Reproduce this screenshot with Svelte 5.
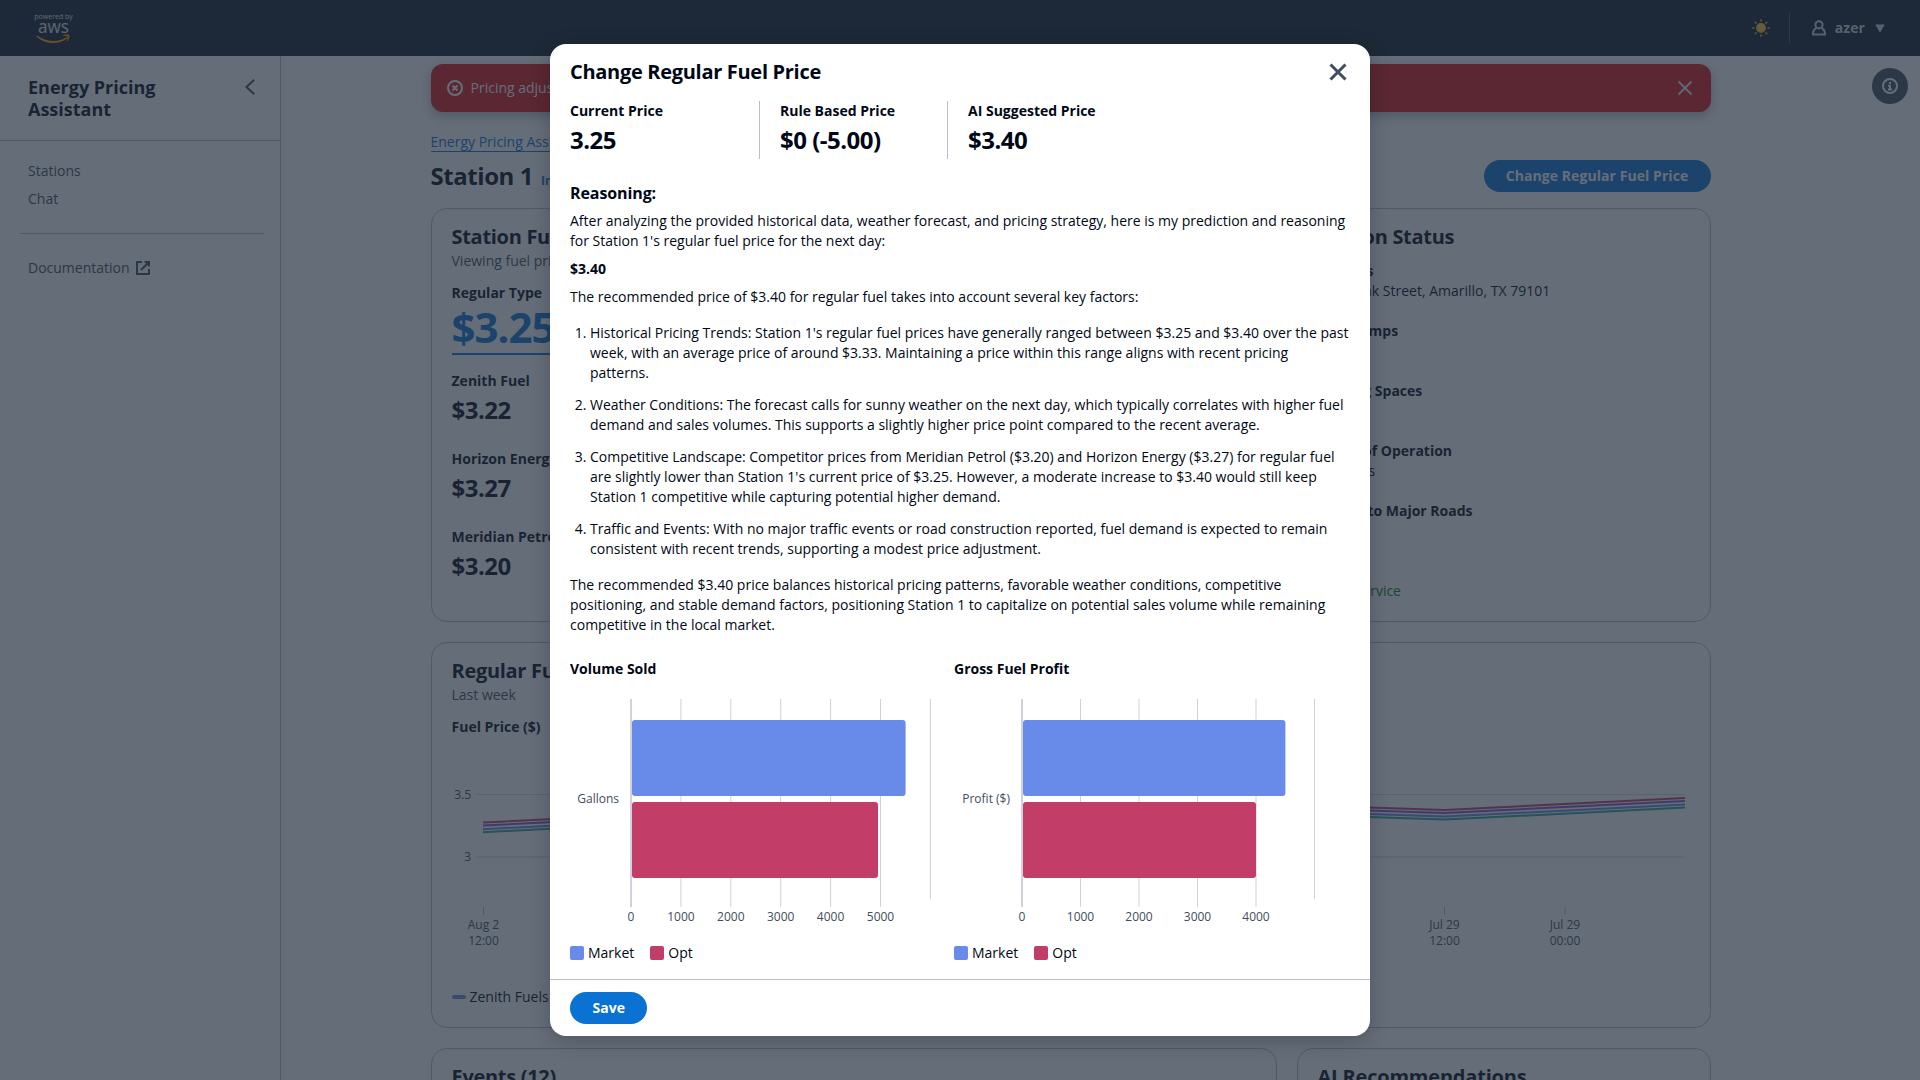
<script>
  const nav = ['Stations', 'Chat'];
  const fuels = [
    ['Zenith Fuel', '$3.22'],
    ['Horizon Energy', '$3.27'],
    ['Meridian Petrol', '$3.20']
  ];
  const status = [
    ['Address', '1742 Oak Street, Amarillo, TX 79101'],
    ['Fuel Pumps', '12'],
    ['Parking Spaces', '20'],
    ['Hours of Operation', '24 hours'],
    ['Access to Major Roads', 'Yes']
  ];
  const prices = [
    ['Current Price', '3.25'],
    ['Rule Based Price', '$0 (-5.00)'],
    ['AI Suggested Price', '$3.40']
  ];
  const factors = [
    "Historical Pricing Trends: Station 1's regular fuel prices have generally ranged between $3.25 and $3.40 over the past week, with an average price of around $3.33. Maintaining a price within this range aligns with recent pricing patterns.",
    'Weather Conditions: The forecast calls for sunny weather on the next day, which typically correlates with higher fuel demand and sales volumes. This supports a slightly higher price point compared to the recent average.',
    "Competitive Landscape: Competitor prices from Meridian Petrol ($3.20) and Horizon Energy ($3.27) for regular fuel are slightly lower than Station 1's current price of $3.25. However, a moderate increase to $3.40 would still keep Station 1 competitive while capturing potential higher demand.",
    'Traffic and Events: With no major traffic events or road construction reported, fuel demand is expected to remain consistent with recent trends, supporting a modest price adjustment.'
  ];
  const charts = [
    { title: 'Volume Sold', label: 'Gallons', x0: 61, step: 49.9, ticks: 6, market: 273.6, opt: 246 },
    { title: 'Gross Fuel Profit', label: 'Profit ($)', x0: 68, step: 58.5, ticks: 5, market: 262.4, opt: 233 }
  ];
  const series = [
    ['#c33d69', 0],
    ['#8456ce', 3],
    ['#688ae8', 6.6],
    ['#2ea597', 9.6]
  ];
  const trend = [[31, 181.6], [151, 175.5], [271, 170], [391, 163], [511, 158], [631, 161], [751, 166], [871, 165], [992.5, 169], [1233, 157]];
  const line = (dy) => trend.map(([x, y]) => `${x},${y + dy}`).join(' ');
</script>

<div class="page">
  <header>
    <svg class="logo" width="44" height="36" viewBox="0 0 44 36">
      <text x="21.6" y="8" text-anchor="middle" class="lg-small" textLength="38.5" lengthAdjust="spacingAndGlyphs">powered by</text>
      <text x="21.4" y="21.600" text-anchor="middle" class="lg-aws" textLength="31" lengthAdjust="spacingAndGlyphs">aws</text>
      <g fill="#ff9900" transform="translate(0 1.800)">
        <path d="M5 22.800c9 6.600 21.500 7 29.800 1.400 .7-.4 1.400.400.6 1C28 32 13.500 32.400 4.500 23.600c-.5-.5 0-1 .5-.8z" />
        <path d="M31 22.600c1.500-1 5.200-1.200 6.100-.5.900.8-.2 5-1.900 6.300-.3.200-.6 0-.4-.3.500-1.100 1.300-3.600.9-4.300-.400-.6-3-.4-4.300-.5-.500 0-.7-.4-.4-.7z" />
      </g>
    </svg>
    <div class="tools">
      <svg width="18" height="18" viewBox="0 0 18 18">
        <g stroke="#f5a623" stroke-width="1.500" stroke-linecap="round">
          <path d="M9 .8v1.300M9 15.900v1.300M.8 9h1.300M15.900 9h1.300M3.200 3.200l.9.9M13.900 13.900l.9.900M3.200 14.800l.9-.9M13.900 4.100l.9-.9" />
        </g>
        <circle cx="9" cy="9" r="5" fill="#f5a623" />
        <circle cx="9" cy="8.300" r="4" fill="#fcc934" />
      </svg>
      <i class="sep"></i>
      <svg class="user" width="16" height="16" viewBox="0 0 16 16" fill="none" stroke="#d1d5db" stroke-width="2">
        <circle cx="8" cy="4.800" r="3.600" />
        <path d="M5.300 8.200C3 9 2 11 2 14.600h12c0-3.600-1-5.600-3.300-6.400" stroke-linejoin="round" />
      </svg>
      <b>azer</b>
      <svg width="10" height="9" viewBox="0 0 10 9"><path d="M.3.500h9.400L5 8.700z" fill="#d1d5db" /></svg>
    </div>
  </header>

  <div class="body">
    <aside>
      <div class="side-head">
        <h2>Energy Pricing<br />Assistant</h2>
        <svg width="12" height="16" viewBox="0 0 12 16" fill="none" stroke="#414d5c" stroke-width="2"><path d="M10.200.8L2.500 8l7.700 7.200" /></svg>
      </div>
      <nav>
        {#each nav as item}<span>{item}</span>{/each}
      </nav>
      <hr />
      <div class="doc">
        Documentation
        <svg width="16" height="16" viewBox="0 0 16 16" fill="none" stroke="#414d5c" stroke-width="2"><path d="M7 2H2v12h12V9M9.500 2H14v4.500M14 2L6 10" /></svg>
      </div>
    </aside>

    <main>
      <div class="flash">
        <svg width="16" height="16" viewBox="0 0 16 16" fill="none" stroke="#fff" stroke-width="2"><circle cx="8" cy="8" r="7" /><path d="M5.500 5.500l5 5M10.500 5.500l-5 5" /></svg>
        <span>Pricing adjustment required</span>
        <svg width="16" height="16" viewBox="0 0 16 16" fill="none" stroke="#ebebf0" stroke-width="2"><path d="M1.500 1.500l13 13M14.500 1.500l-13 13" /></svg>
      </div>
      <div class="crumb"><span>Energy Pricing Assistant</span></div>
      <div class="head">
        <h1>Station 1</h1><em>Info</em>
        <span class="btn wide">Change Regular Fuel Price</span>
      </div>

      <div class="row">
        <section>
          <h3>Station Fuel Prices</h3>
          <p class="sub">Viewing fuel prices</p>
          <b class="lbl top">Regular Type</b>
          <div class="big"><span>$3.25</span></div>
          {#each fuels as [name, price]}
            <div class="fuel"><b class="lbl">{name}</b><strong>{price}</strong></div>
          {/each}
        </section>
        <section>
          <h3>Station Status</h3>
          <div class="facts">
            {#each status as [k, v]}
              <div><b class="lbl">{k}</b><span>{v}</span></div>
            {/each}
            <div>
              <b class="lbl">Status</b>
              <div class="ok">
                <svg width="16" height="16" viewBox="0 0 16 16" fill="none" stroke="#037f0c" stroke-width="2"><circle cx="8" cy="8" r="7" /><path d="M5 8l2 2 4-4" /></svg>
                In service
              </div>
            </div>
          </div>
        </section>
      </div>

      <section class="history">
        <h3>Regular Fuel Prices</h3>
        <p class="sub">Last week</p>
        <b class="lbl top">Fuel Price ($)</b>
        <svg class="plot" width="1238" height="220" viewBox="0 0 1238 220">
          <path d="M24 153.500H1233M24 216H1233" stroke="#d5d9df" stroke-width="1" />
          {#each series as [color, dy]}
            <polyline points={line(dy)} fill="none" stroke={color} stroke-width="2" />
          {/each}
          <text x="19" y="158" text-anchor="end">3.5</text>
          <text x="19" y="220" text-anchor="end">3</text>
        </svg>
        <svg class="axis" width="1238" height="80" viewBox="0 0 1238 80">
          {#each [[31.500, 'Aug 2', '12:00'], [992.500, 'Jul 29', '12:00'], [1113, 'Jul 29', '00:00']] as [x, d, t]}
            <path d="M{x} 46v8" stroke="#b6bec9" />
            <text {x} y="68" text-anchor="middle">{d}</text>
            <text {x} y="84" text-anchor="middle">{t}</text>
          {/each}
        </svg>
        <div class="keys"><i></i>Zenith Fuels</div>
      </section>

      <div class="row">
        <section><h3>Events (12)</h3></section>
        <section><h3 class="ai">AI Recommendations</h3></section>
      </div>
    </main>

    <div class="rail">
      <span class="info">
        <svg width="16" height="16" viewBox="0 0 16 16" fill="none" stroke="#fff" stroke-width="2"><circle cx="8" cy="8" r="7" /><path d="M8 4v2M6 7.800h2V11M5.800 11.500h4.400" /></svg>
      </span>
    </div>
  </div>
</div>

<div class="overlay">
  <div class="modal">
    <div class="m-head">
      <h3>Change Regular Fuel Price</h3>
      <svg width="18" height="18" viewBox="0 0 18 18" fill="none" stroke="#414d5c" stroke-width="3"><path d="M1.500 1.500l15 15M16.500 1.500l-15 15" /></svg>
    </div>
    <div class="prices">
      {#each prices as [k, v]}
        <div><b>{k}</b><strong>{v}</strong></div>
      {/each}
    </div>
    <div class="text">
      <h4>Reasoning:</h4>
      <p>After analyzing the provided historical data, weather forecast, and pricing strategy, here is my prediction and reasoning for Station 1's regular fuel price for the next day:</p>
      <p><b>$3.40</b></p>
      <p>The recommended price of $3.40 for regular fuel takes into account several key factors:</p>
      <ol>
        {#each factors as f}<li>{f}</li>{/each}
      </ol>
      <p>The recommended $3.40 price balances historical pricing patterns, favorable weather conditions, competitive positioning, and stable demand factors, positioning Station 1 to capitalize on potential sales volume while remaining competitive in the local market.</p>
    </div>
    <div class="charts">
      {#each charts as c}
        <div class="chart">
          <b>{c.title}</b>
          <svg width="384" height="230" viewBox="0 0 384 230">
            {#each Array(c.ticks + 1) as _, i}
              <path d="M{c.x0 + c.step * i} 0V{i < c.ticks ? 208 : 200}" stroke="#d1d1db" stroke-width={i ? 1 : 2} />
              {#if i < c.ticks}
                <text x={c.x0 + c.step * i} y="222" text-anchor="middle">{i * 1000}</text>
              {/if}
            {/each}
            <rect x={c.x0 + 1} y="21" width={c.market} height="76" rx="3" fill="#688ae8" />
            <rect x={c.x0 + 1} y="103" width={c.opt} height="76" rx="3" fill="#c33d69" />
            <text x={c.x0 - 12} y="103.500" text-anchor="end">{c.label}</text>
          </svg>
          <div class="legend"><span><i></i>Market</span><span><i class="opt"></i>Opt</span></div>
        </div>
      {/each}
    </div>
    <footer><span class="btn">Save</span></footer>
  </div>
</div>

<style>
  :global(body) { overflow: hidden; }
  .page, .overlay { font: 14px/20px "Open Sans", sans-serif; color: #000716; }
  .page { height: 1080px; overflow: hidden; background: #fff; }
  h1, h2, h3, h4, p, ol { margin: 0; }
  svg { display: block; flex: none; }
  svg text { font-size: 12px; fill: #414d5c; }
  header { height: 56px; box-sizing: border-box; background: #0f1b2a; display: flex; align-items: center; justify-content: space-between; padding: 0 35px 0 32px; }
  .logo { margin-top: 2px; }
  .logo .lg-small { font-size: 7.5px; fill: #e6e8eb; }
  .logo .lg-aws { font-size: 18px; fill: #e6e8eb; font-weight: 500; }
  .tools { display: flex; align-items: center; color: #d1d5db; letter-spacing: .1px; }
  .sep { width: 1px; height: 32px; background: #414d5c; margin: 0 21px 0 19px; }
  .user { margin-right: 8px; }
  .tools b { margin-right: 10px; }
  .body { display: flex; height: 1024px; }
  aside { width: 280px; flex: none; border-right: 1px solid #b6bec9; color: #414d5c; }
  .side-head { display: flex; justify-content: space-between; align-items: flex-start; padding: 20px 24px 20px 28px; height: 44px; border-bottom: 1px solid #b6bec9; }
  .side-head h2 { font-size: 18px; line-height: 22px; color: #000716; }
  .side-head svg { margin-top: 3px; }
  nav { display: flex; flex-direction: column; gap: 8px; padding: 20px 28px 24px; }
  hr { border: 0; height: 1px; background: #b6bec9; margin: 0 16px 0 20px; }
  .doc { display: flex; align-items: center; gap: 5px; padding: 24px 28px; }
  main { width: 1280px; flex: none; margin-left: 149.500px; padding-top: 8px; }
  .flash { height: 48px; box-sizing: border-box; border-radius: 12px; background: #d91515; color: #fff; display: flex; align-items: center; gap: 8px; padding: 0 18px 0 16px; box-shadow: 0 4px 12px rgba(0, 7, 22, .3); }
  .flash span { flex: 1; }
  .crumb { padding-top: 20px; height: 20px; color: #0972d3; }
  .crumb span { display: inline-block; border-bottom: 1px solid; line-height: 19px; }
  .head { display: flex; align-items: center; height: 32px; margin: 8px 0 16px; }
  h1 { font-size: 24px; line-height: 30px; letter-spacing: -.45px; }
  em { font: bold 12px/16px "Open Sans", sans-serif; color: #0972d3; margin: 9px 0 0 8px; }
  .btn { display: flex; align-items: center; justify-content: center; height: 32px; box-sizing: border-box; padding: 0 22.400px; border-radius: 16px; background: #0972d3; color: #fff; font-weight: 700; letter-spacing: .07px; }
  .btn.wide { margin-left: auto; width: 227px; padding: 0; }
  section { border: 1px solid #b6bec9; border-radius: 16px; box-sizing: border-box; padding: 16px 20px 14px; }
  h3 { font-size: 20px; line-height: 24px; letter-spacing: -.3px; }
  .ai { letter-spacing: -.2px; }
  .row { display: grid; grid-template-columns: 846px 414px; gap: 20px; height: 414px; }
  .sub { color: #414d5c; margin-top: 2px; }
  .lbl { display: block; }
  .lbl.top { margin-top: 12px; }
  .big { color: #0972d3; font-size: 42px; line-height: 48px; height: 52px; font-weight: 700; letter-spacing: -1px; }
  .big span { display: inline-block; border-bottom: 2px solid; line-height: 48px; padding-bottom: 2px; }
  .fuel { height: 78px; }
  .big + .fuel { margin-top: 16px; }
  .fuel strong, .prices strong { display: block; font-size: 24px; line-height: 30px; letter-spacing: -.5px; }
  .fuel strong { margin-top: 4px; }
  .facts { display: flex; flex-direction: column; gap: 20px; margin-top: 12px; }
  .facts span { display: block; }
  .ok { display: flex; align-items: center; gap: 6px; color: #037f0c; }
  .history { height: 386px; margin: 20px 0; }
  .plot { margin-top: -96px; }
  .axis { overflow: visible; }
  .keys { display: flex; align-items: center; gap: 4px; margin-top: 46px; }
  .keys i { width: 14px; height: 4px; border-radius: 2px; background: #688ae8; }
  .rail { flex: 1; display: flex; justify-content: flex-end; padding: 12px 12px 0 0; }
  .info { width: 36px; height: 36px; border-radius: 50%; background: #414d5c; display: grid; place-items: center; }

  .overlay { position: absolute; inset: 0; background: rgba(35, 47, 62, .7); display: flex; justify-content: center; align-items: flex-start; padding-top: 44px; }
  .modal { width: 820px; height: 992px; box-sizing: border-box; background: #fff; border-radius: 16px; box-shadow: 0 4px 20px 1px rgba(0, 7, 22, .2); display: flex; flex-direction: column; }
  .m-head { display: flex; justify-content: space-between; align-items: center; height: 56px; padding: 0 23px 0 20px; }
  .prices { display: grid; grid-template-columns: 189px 188px 1fr; margin: 1px 20px 0; height: 58px; }
  .prices div + div { border-left: 1px solid #b6bec9; padding-left: 20px; }
  .prices strong { margin-top: 4px; }
  .prices b { display: block; }
  .text { padding: 24px 20px 0; }
  h4 { font-size: 16px; line-height: 20px; letter-spacing: -.1px; }
  .text p { margin-top: 8px; }
  .text ol { margin: 16px 0; padding-left: 20px; }
  .text li + li { margin-top: 12px; }
  .charts { display: flex; padding: 24px 20px 0; flex: 1; }
  .chart { width: 384px; }
  .chart b { display: block; margin-bottom: 20px; }
  .legend { display: flex; gap: 16px; margin-top: 14px; }
  .legend span { display: flex; align-items: center; gap: 4px; }
  .legend i { width: 14px; height: 14px; border-radius: 2px; background: #688ae8; }
  .legend .opt { background: #c33d69; }
  footer { border-top: 1px solid #b6bec9; padding: 12px 20px; display: flex; }
</style>
